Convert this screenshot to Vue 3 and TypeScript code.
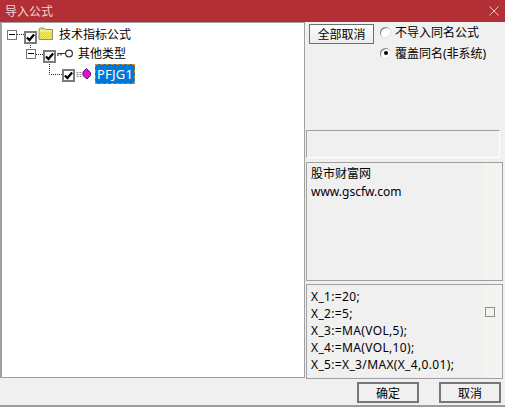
<script setup lang="ts">
interface Node { label: string; level: number; icon: string; selected?: boolean; expander?: boolean }
const nodes: Node[] = [
  { label: '技术指标公式', level: 0, icon: 'folder', expander: true },
  { label: '其他类型', level: 1, icon: 'key', expander: true },
  { label: 'PFJG1', level: 2, icon: 'gem', selected: true },
]
const codeLines = ['X_1:=20;', 'X_2:=5;', 'X_3:=MA(VOL,5);', 'X_4:=MA(VOL,10);', 'X_5:=X_3/MAX(X_4,0.01);']
</script>

<template>
  <div class="win">
    <header class="title">
      <span class="title-text">导入公式</span>
      <svg class="close" width="10" height="10" viewBox="0 0 10 10"><path d="M0.5 0.5L9.5 9.5M9.5 0.5L0.5 9.5" stroke="#e8c8ca" stroke-width="1" fill="none" /></svg>
    </header>
    <div class="main">
      <section class="tree">
        <svg class="lines" width="100" height="70" viewBox="0 0 100 70">
          <path d="M15 11.5H22M28.5 20V27M34 31.5H41M47.5 39V51.5H60" stroke="#222" stroke-dasharray="1 1" fill="none" />
        </svg>
        <div v-for="n in nodes" :key="n.label" class="row" :class="'lv' + n.level">
          <span v-if="n.expander" class="exp"><i></i></span>
          <span v-else class="exp-gap"></span>
          <span class="check">
            <svg width="10" height="10" viewBox="0 0 10 10"><path d="M1 5L3.8 7.8L9 1.6" stroke="#000" stroke-width="2.5" fill="none" /></svg>
          </span>
          <svg v-if="n.icon === 'folder'" class="ico" width="16" height="14" viewBox="0 0 16 14">
            <defs>
              <pattern id="chk" width="2" height="2" patternUnits="userSpaceOnUse">
                <rect width="2" height="2" fill="#f6ec5e" />
                <rect width="1" height="1" fill="#d8cf58" />
                <rect x="1" y="1" width="1" height="1" fill="#d8cf58" />
              </pattern>
            </defs>
            <path d="M1 3.5V2L2 1H6L7.5 2.5H14.5V12.5H1Z" fill="url(#chk)" stroke="#8f8c70" />
            <path d="M2 4H14" stroke="#fff9b8" />
          </svg>
          <svg v-else-if="n.icon === 'key'" class="ico" width="16" height="14" viewBox="0 0 16 14">
            <circle cx="12" cy="7.5" r="3.4" fill="#fff" stroke="#333" stroke-width="1.2" />
            <path d="M0.5 7.5H8.5M1 7.5V10M4 7.5V9.5" stroke="#333" stroke-width="1.2" fill="none" />
          </svg>
          <svg v-else class="ico" width="16" height="14" viewBox="0 0 16 14">
            <path d="M0.5 7.5H6.5M0.5 9.5H6.5M0.5 11.5H6.5" stroke="#888" stroke-width="1" stroke-dasharray="2 1" />
            <path d="M10.5 3.5L14.5 7.5V10.5L11 14L7 10.5V7Z" fill="#e60fd0" stroke="#5a1670" />
          </svg>
          <span class="label" :class="{ sel: n.selected }">{{ n.label }}</span>
        </div>
      </section>
      <aside class="side">
        <div class="opts">
          <button class="btn all" type="button">全部取消</button>
          <div class="radios">
            <label class="radio"><span class="dot"></span>不导入同名公式</label>
            <label class="radio"><span class="dot on"></span>覆盖同名(非系统)</label>
          </div>
        </div>
        <div class="status"></div>
        <div class="desc">
          <p>股市财富网</p>
          <p>www.gscfw.com</p>
        </div>
        <div class="code">
          <p v-for="l in codeLines" :key="l">{{ l }}</p>
          <span class="mini"></span>
        </div>
      </aside>
    </div>
    <footer class="foot">
      <button class="btn act" type="button">确定</button>
      <button class="btn act" type="button">取消</button>
    </footer>
  </div>
</template>

<style scoped>
.win {
  width: 505px;
  height: 407px;
  box-sizing: border-box;
  background: #f0f0f0;
  border-bottom: 2px solid #9c9c9c;
  font-family: "Noto Sans", "Noto Sans CJK SC", sans-serif;
  font-size: 12px;
  color: #000;
  display: flex;
  flex-direction: column;
  overflow: hidden;
}
.title {
  height: 22px;
  flex: none;
  background: #b22f35;
  display: flex;
  align-items: center;
  justify-content: space-between;
  padding: 0 6px 0 5px;
}
.title-text { color: #f1d6d7; font-size: 12px; }
.main {
  flex: none;
  height: 356px;
  display: flex;
  border-left: 1px solid #a0a0a0;
}
.tree {
  position: relative;
  flex: none;
  width: 304px;
  box-sizing: border-box;
  background: #fff;
  border: 1px solid #a0a0a0;
  padding-top: 2px;
}
.lines { position: absolute; left: 0; top: 0; }
.row {
  position: relative;
  height: 19px;
  display: flex;
  align-items: center;
  line-height: 19px;
}
.lv0 { padding-left: 5px; }
.lv1 { padding-left: 24px; }
.lv2 { padding-left: 43px; }
.exp {
  width: 10px;
  height: 10px;
  box-sizing: border-box;
  border: 1px solid #777;
  background: #fff;
  display: flex;
  align-items: center;
  justify-content: center;
  margin-right: 7px;
  flex: none;
}
.exp i { width: 6px; height: 1px; background: #000; display: block; }
.exp-gap { width: 17px; flex: none; }
.check {
  width: 13px;
  height: 13px;
  box-sizing: border-box;
  border: 2px solid #7b7b7b;
  background: #fff;
  display: flex;
  align-items: center;
  justify-content: center;
  margin-top: 6px;
  flex: none;
}
.check svg { display: block; flex: none; width: 9px; height: 9px; }
.ico { margin-left: 1px; flex: none; display: block; margin-top: -2px; overflow: visible; }
.label { margin-left: 5px; white-space: nowrap; }
.sel {
  margin-left: 3px;
  margin-top: 3px;
  background: #0078d7;
  color: #fff;
  outline: 1px dashed #d98a1c;
  outline-offset: -1px;
  padding: 0 2px;
  font-size: 13px;
  line-height: 20px;
  letter-spacing: 0.2px;
}
.side {
  flex: none;
  width: 200px;
  box-sizing: border-box;
  padding: 2px 0 0 1px;
  display: flex;
  flex-direction: column;
}
.opts {
  height: 106px;
  flex: none;
  display: flex;
  padding-left: 3px;
  gap: 6px;
}
.btn {
  font: inherit;
  color: #000;
  background: #f0f0f0;
  box-sizing: border-box;
  border: 2px solid #777;
  padding: 0;
}
.all {
  width: 65px;
  height: 20px;
  border: 1px solid #6e6e6e;
  background: linear-gradient(#fdfdfd, #ececec);
}
.radios { display: flex; flex-direction: column; gap: 5px; }
.radio { display: flex; align-items: center; height: 16px; white-space: nowrap; gap: 4px; }
.dot {
  width: 11px;
  height: 11px;
  box-sizing: border-box;
  border-radius: 50%;
  background: #fff;
  box-shadow: inset 1px 1px 0 #7f7f7f, inset -1px -1px 0 #e4e4e4;
  display: flex;
  align-items: center;
  justify-content: center;
}
.dot.on::after { content: ""; width: 4px; height: 4px; border-radius: 50%; background: #000; }
.status {
  flex: none;
  height: 28px;
  width: 194px;
  box-sizing: border-box;
  border: 1px solid #a0a0a0;
  border-bottom-color: #fff;
  border-right-color: #fff;
}
.desc, .code {
  flex: none;
  width: 197px;
  box-sizing: border-box;
  border: 1px solid #a0a0a0;
  background: #f0f0f0;
  padding: 2px 0 0 4px;
  border-right: 19px solid #f4f3f0;
  outline: 1px solid #a0a0a0;
  outline-offset: -1px;
}
.desc { height: 119px; margin-top: 4px; }
.code { height: 95px; margin-top: 3px; position: relative; padding-top: 3px; }
.desc p, .code p { margin: 0; line-height: 18px; white-space: nowrap; }
.code p { line-height: 17px; letter-spacing: 0.35px; }
.mini {
  position: absolute;
  right: -11px;
  top: 22px;
  width: 10px;
  height: 10px;
  box-sizing: border-box;
  border: 1px solid #8d8d8d;
  background: #f4f3f0;
}
.foot {
  flex: 1;
  display: flex;
  justify-content: flex-end;
  align-items: flex-start;
  gap: 20px;
  padding: 4px 4px 0 0;
}
.act { width: 62px; height: 21px; }
</style>
